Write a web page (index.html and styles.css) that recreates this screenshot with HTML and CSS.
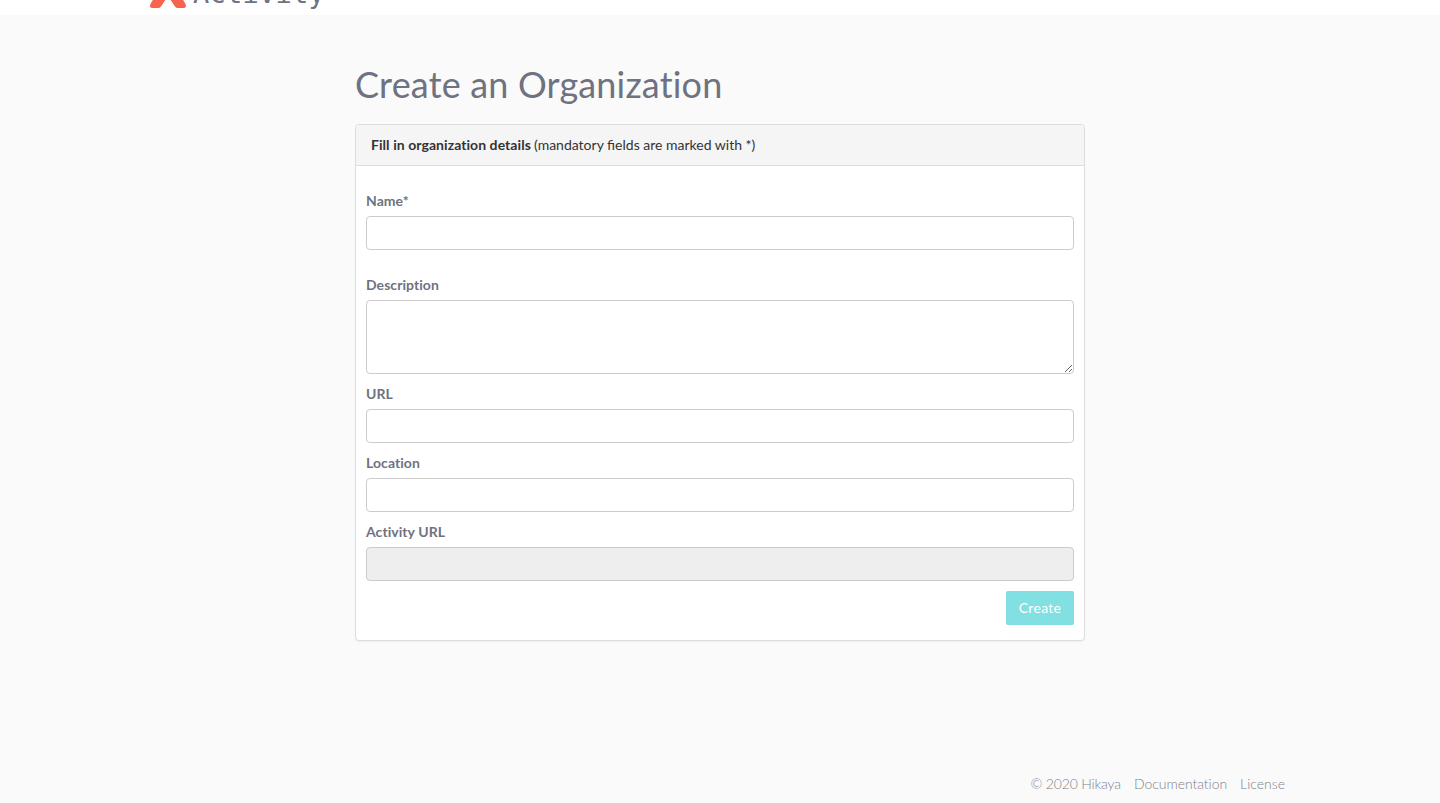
FILE: index.html
```
<!DOCTYPE html>
<html lang="en">
<head>
<meta charset="utf-8">
<title>Create an Organization</title>
<link rel="stylesheet" href="styles.css">
</head>
<body>
<header class="navbar">
  <a class="brand">
    <svg class="brand-mark" width="38" height="36" viewBox="0 0 38 36"><path d="M13 12H25L36.500 32Q38 36 34 36H29Q27 36 26 34.500L19 24L12 34.500Q11 36 9 36H3Q0 36 1.500 32Z" fill="#f7644d"/></svg>
    <span class="brand-name">Activity</span>
  </a>
</header>
<main class="content">
  <h1 class="title">Create an Organization</h1>
  <section class="panel">
    <div class="panel-heading"><strong>Fill in organization details</strong> <span class="hint">(mandatory fields are marked with *)</span></div>
    <form class="panel-body">
      <div class="group group-spaced"><label for="name">Name*</label><input id="name" class="control" type="text"></div>
      <div class="group"><label for="desc">Description</label><textarea id="desc" class="control area"></textarea></div>
      <div class="group"><label for="url">URL</label><input id="url" class="control" type="text"></div>
      <div class="group"><label for="loc">Location</label><input id="loc" class="control" type="text"></div>
      <div class="group"><label for="act">Activity URL</label><input id="act" class="control" type="text" disabled></div>
      <div class="actions"><button class="btn" type="button" disabled>Create</button></div>
    </form>
  </section>
</main>
<footer class="footer"><span class="copyright">© 2020 Hikaya</span><a class="docs">Documentation</a><a>License</a></footer>
</body>
</html>
```
FILE: styles.css
```
* { box-sizing: border-box; }
html, body { height: 100%; }
body {
  margin: 0;
  display: flex;
  flex-direction: column;
  background: #fafafa;
  color: #6e7281;
  font: 14px/20px Lato, sans-serif;
  font-variant-ligatures: none;
  overflow: hidden;
}
.navbar {
  height: 15px;
  flex: none;
  display: flex;
  align-items: flex-end;
  padding: 0 149px 7px;
  background: #fff;
}
.brand { display: flex; align-items: flex-end; gap: 6px; }
.brand-mark { display: block; }
.brand-name {
  padding-bottom: 1px;
  font: 27px/27px "DejaVu Sans Mono", monospace;
  letter-spacing: .25px;
}
.content { width: 730px; margin: 0 auto; padding-top: 49px; }
.title {
  margin: 0 0 20px;
  font-size: 36px;
  line-height: 40px;
  font-weight: 400;
  letter-spacing: .17px;
}
.panel {
  border: 1px solid #ddd;
  border-radius: 4px;
  background: #fff;
  box-shadow: 0 1px 1px rgba(0, 0, 0, .05);
}
.panel-heading {
  padding: 10px 15px;
  background: #f5f5f5;
  border-bottom: 1px solid #ddd;
  border-radius: 3px 3px 0 0;
  color: #333;
}
.panel-heading strong { letter-spacing: .06px; }
.hint { font-variant-ligatures: normal; margin-left: -.5px; }
.panel-body { padding: 25px 10px 15px; }
.group { margin-bottom: 10px; }
.group-spaced { margin-bottom: 25px; }
.group label { display: block; margin-bottom: 5px; font-weight: 700; letter-spacing: .06px; }
.control {
  display: block;
  width: 100%;
  height: 34px;
  padding: 6px 12px;
  border: 1px solid #ccc;
  border-radius: 4px;
  background: #fff;
  font: inherit;
}
.control:disabled { background: #eee; }
.area { height: 74px; resize: vertical; }
.actions { display: flex; justify-content: flex-end; }
.btn {
  width: 68px;
  height: 34px;
  padding: 0;
  border: 0;
  border-radius: 2px;
  background: #82dfe2;
  color: #fff;
  font: inherit;
  letter-spacing: .3px;
}
.footer {
  display: flex;
  justify-content: flex-end;
  gap: 13px;
  margin-top: auto;
  padding: 0 155px 9px;
  color: #7f828d;
  font-weight: 300;
}
.copyright { letter-spacing: -.15px; }
.docs { letter-spacing: -.05px; }
```
